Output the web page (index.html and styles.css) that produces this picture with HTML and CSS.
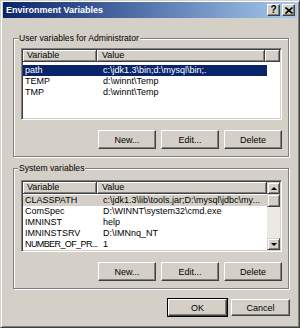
FILE: index.html
```html
<!DOCTYPE html>
<html lang="en">
<head>
  <meta charset="UTF-8" />
  <title>Environment Variables</title>
  <link rel="stylesheet" href="styles.css">
</head>
<body>
  <div class="window">
    <div class="titlebar">
      <span class="title">Environment Variables</span>
      <div class="caption-btns">
        <span class="cap-btn">?</span>
        <span class="cap-btn">
          <svg width="8" height="7" viewBox="0 0 8 7"><path d="M0.5 0.5 L7.5 6.5 M7.5 0.5 L0.5 6.5" stroke="#000" stroke-width="1.6"/></svg>
        </span>
      </div>
    </div>

    <div class="dialog">
      <fieldset class="group">
        <legend>User variables for Administrator</legend>
        <div class="listview list-user">
          <div class="lv-header">
            <span class="hcol col-var">Variable</span>
            <span class="hcol col-val">Value</span>
            <span class="hcol col-fill"></span>
          </div>
          <div class="lv-rows">
            <div class="row selected"><span class="col-var">path</span><span class="col-val">c:\jdk1.3\bin;d:\mysql\bin;.</span></div>
            <div class="row"><span class="col-var">TEMP</span><span class="col-val">d:\winnt\Temp</span></div>
            <div class="row"><span class="col-var">TMP</span><span class="col-val">d:\winnt\Temp</span></div>
          </div>
        </div>
        <div class="btn-row">
          <button class="btn">New...</button>
          <button class="btn">Edit...</button>
          <button class="btn">Delete</button>
        </div>
      </fieldset>

      <fieldset class="group group-sys">
        <legend>System variables</legend>
        <div class="listview list-sys">
          <div class="lv-main">
            <div class="lv-header">
              <span class="hcol col-var">Variable</span>
              <span class="hcol col-val">Value</span>
            </div>
            <div class="lv-rows">
              <div class="row inactive"><span class="col-var">CLASSPATH</span><span class="col-val">c:\jdk1.3\lib\tools.jar;D:\mysql\jdbc\my...</span></div>
              <div class="row"><span class="col-var">ComSpec</span><span class="col-val">D:\WINNT\system32\cmd.exe</span></div>
              <div class="row"><span class="col-var">IMNINST</span><span class="col-val">help</span></div>
              <div class="row"><span class="col-var">IMNINSTSRV</span><span class="col-val">D:\IMNnq_NT</span></div>
              <div class="row"><span class="col-var tight">NUMBER_OF_PR...</span><span class="col-val">1</span></div>
            </div>
          </div>
          <div class="scrollbar">
            <span class="sb-btn"><span class="arrow-up"></span></span>
            <span class="sb-thumb"></span>
            <span class="sb-track"></span>
            <span class="sb-btn"><span class="arrow-down"></span></span>
          </div>
        </div>
        <div class="btn-row">
          <button class="btn">New...</button>
          <button class="btn">Edit...</button>
          <button class="btn">Delete</button>
        </div>
      </fieldset>

      <div class="dialog-btns">
        <button class="btn btn-default">OK</button>
        <button class="btn">Cancel</button>
      </div>
    </div>
  </div>
</body>
</html>
```

FILE: styles.css
```css
/* --- Global --- */
* { box-sizing: border-box; margin: 0; padding: 0; }
body {
  font-family: 'Liberation Sans', Arial, sans-serif;
  font-size: 9px;
  color: #000;
  background: #d4d0c8;
}

/* --- Window frame --- */
.window {
  width: 300px;
  height: 328px;
  background: #d4d0c8;
  border: 1px solid;
  border-color: #d4d0c8 #404040 #404040 #d4d0c8;
  box-shadow: inset 1px 1px 0 #fff, inset -1px -1px 0 #808080;
  padding: 1px 2px 2px;
}

.titlebar {
  height: 16px;
  background: linear-gradient(to right, #0a246a, #a6caf0);
  display: flex;
  align-items: center;
  justify-content: space-between;
  padding: 0 2px 0 3px;
}
.title {
  color: #fff;
  font-weight: bold;
  font-size: 9px;
}
.caption-btns {
  display: flex;
  gap: 2px;
}
.cap-btn {
  width: 13px;
  height: 12px;
  background: #d4d0c8;
  border: 1px solid;
  border-color: #fff #404040 #404040 #fff;
  box-shadow: inset -1px -1px 0 #808080;
  display: flex;
  align-items: center;
  justify-content: center;
  font-weight: bold;
  font-size: 10px;
  line-height: 1;
}

/* --- Dialog body --- */
.dialog {
  padding: 15px 8px 0 10px;
}

.group {
  border: 1px solid #808080;
  box-shadow: inset 1px 1px 0 #fff, 1px 1px 0 #fff;
  padding: 4px 6px 7px 7px;
}
.group legend {
  margin-left: -3px;
  padding: 0 1px;
  background: #d4d0c8;
  line-height: 11px;
  font-size: 8.6px;
}
.group-sys {
  margin-top: 6px;
  padding-top: 6px;
}

/* --- List view --- */
.listview {
  background: #fff;
  border: 1px solid;
  border-color: #808080 #fff #fff #808080;
  box-shadow: inset 1px 1px 0 #404040, inset -1px -1px 0 #d4d0c8;
  padding: 1px;
  overflow: hidden;
}
.list-user { height: 72px; }
.list-sys {
  height: 72px;
  display: flex;
}
.lv-main { flex: 1; }

.lv-header {
  display: flex;
  height: 12px;
}
.hcol {
  background: #d4d0c8;
  border-right: 1px solid #404040;
  border-bottom: 1px solid #404040;
  box-shadow: inset 1px 1px 0 #fff, inset -1px -1px 0 #808080;
  padding-left: 4px;
  line-height: 11px;
}
.lv-header .col-var { width: 74px; }
.lv-header .col-val { width: 168px; padding-left: 5px; }
.list-sys .lv-header .col-val { flex: 1; }
.hcol.col-fill { flex: 1; }

.lv-rows { padding-top: 3px; }
.list-sys .lv-rows { padding-top: 1px; }
.row {
  display: flex;
  height: 11px;
  line-height: 11px;
  width: 244px;
  white-space: nowrap;
}
.row .col-var { width: 74px; padding-left: 2px; flex-shrink: 0; }
.row .col-var.tight { letter-spacing: -0.6px; }
.row .col-val { padding-left: 6px; }
.row.selected { background: #0a246a; color: #fff; }
.row.inactive { background: #d4d0c8; }

/* --- Scrollbar --- */
.scrollbar {
  width: 13px;
  display: flex;
  flex-direction: column;
  background: #ece9e2;
}
.sb-btn, .sb-thumb {
  height: 12px;
  background: #d4d0c8;
  border: 1px solid;
  border-color: #d4d0c8 #404040 #404040 #d4d0c8;
  box-shadow: inset 1px 1px 0 #fff, inset -1px -1px 0 #808080;
  display: flex;
  align-items: center;
  justify-content: center;
}
.sb-thumb { height: 13px; }
.sb-track { flex: 1; }
.arrow-up {
  border-left: 3px solid transparent;
  border-right: 3px solid transparent;
  border-bottom: 3px solid #000;
}
.arrow-down {
  border-left: 3px solid transparent;
  border-right: 3px solid transparent;
  border-top: 3px solid #000;
}

/* --- Buttons --- */
.btn-row {
  display: flex;
  justify-content: flex-end;
  gap: 5px;
  margin-top: 10px;
}
.btn {
  width: 58px;
  height: 19px;
  font-family: 'Liberation Sans', Arial, sans-serif;
  font-size: 9px;
  color: #000;
  background: #d4d0c8;
  border: 1px solid;
  border-color: #fff #404040 #404040 #fff;
  box-shadow: inset -1px -1px 0 #808080;
}
.dialog-btns {
  display: flex;
  justify-content: flex-end;
  gap: 4px;
  margin-top: 10px;
  margin-right: -1px;
}
.dialog-btns .btn { width: 59px; height: 17px; }
.btn-default {
  outline: 1px solid #000;
  outline-offset: 0;
}
```
